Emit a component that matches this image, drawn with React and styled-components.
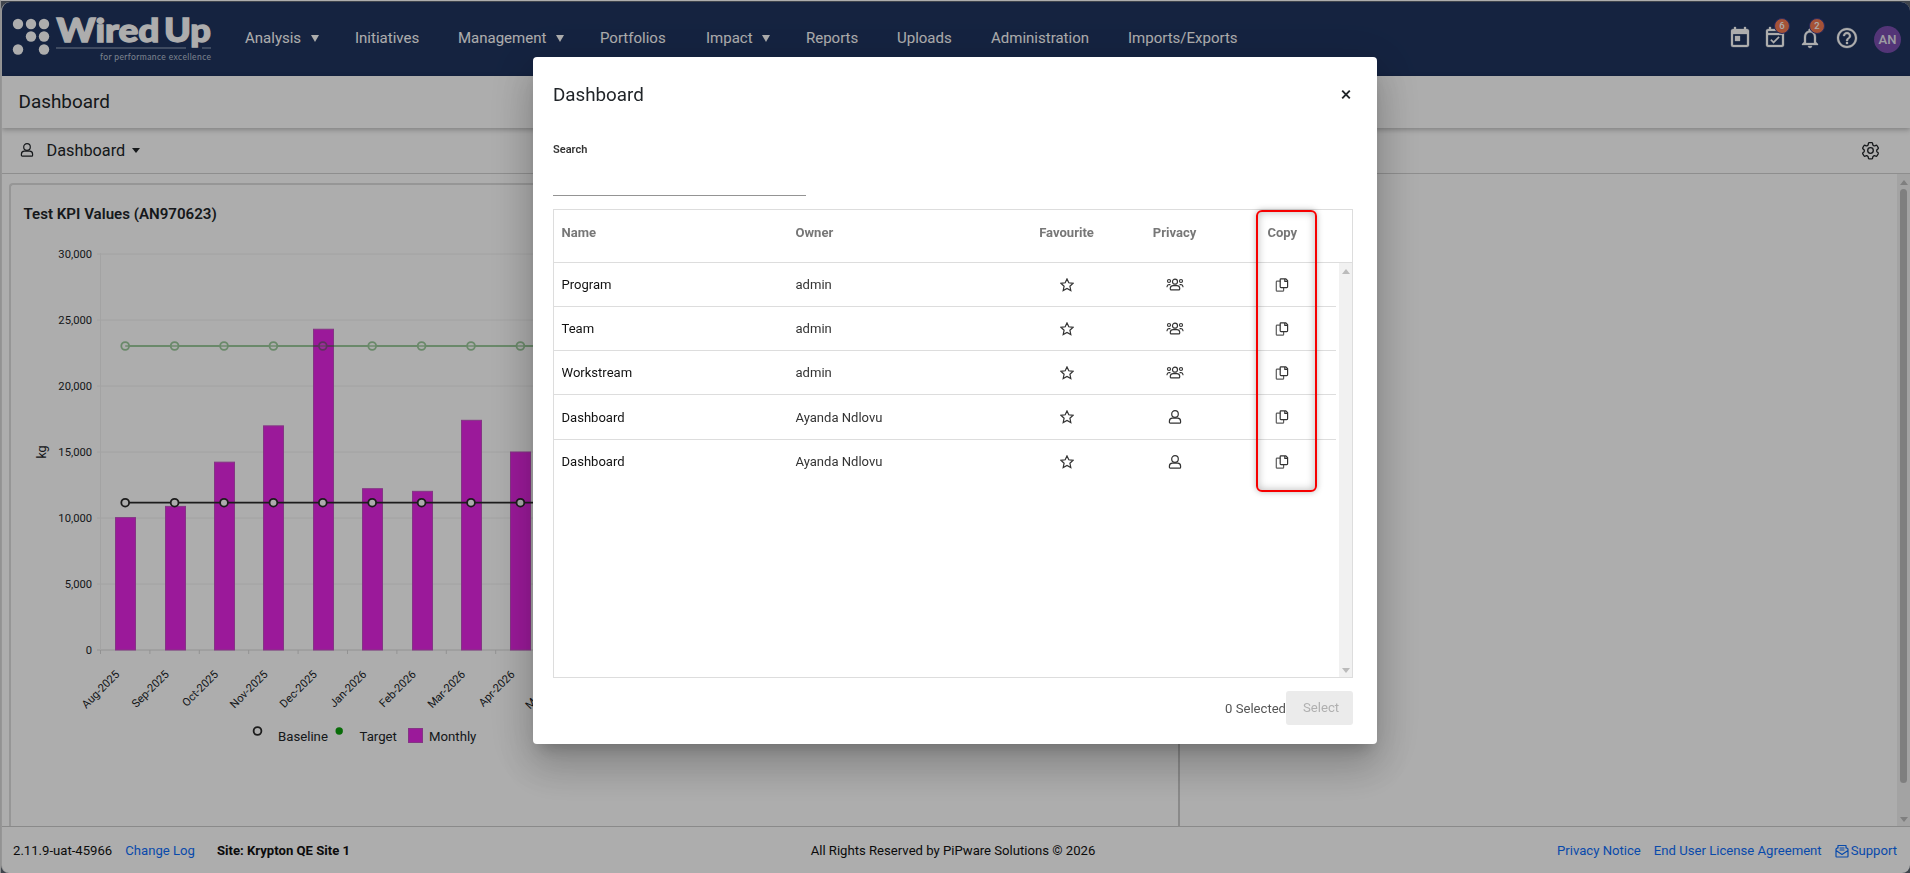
import React from 'react';
import styled, { createGlobalStyle } from 'styled-components';
import { MdToday, MdOutlineEventAvailable, MdNotificationsNone, MdHelpOutline } from 'react-icons/md';

const Global = createGlobalStyle`
  *{box-sizing:border-box}
  html,body,#root{height:100%;margin:0}
  body{font-family:Roboto,"Liberation Sans",sans-serif;color:#212529;background:#fff;overflow:hidden}
`;

const Frame = styled.div`height:873px;width:1910px;background:#5d6570;border:1px solid #d8d8d8;border-top-color:#fff;border-right:0;border-bottom:0;padding:1px 0 0 0;`;
const Page = styled.div`height:871px;display:flex;flex-direction:column;background:#fff;border-radius:9px 9px 8px 8px;overflow:hidden;border-left:1px solid #ddd;isolation:isolate;`;
const Header = styled.header`height:74px;flex:none;background:#1f345f;display:flex;align-items:center;color:#fff;`;
const LogoSvg = styled.svg`width:204px;height:60px;margin:0 0 2px 10px;flex:none;`;
const Nav = styled.nav`display:flex;margin-left:29px;margin-bottom:2px;align-items:center;`;
const NavItem = styled.a`width:${p => p.$w}px;font-size:15px;line-height:20px;white-space:nowrap;display:flex;align-items:center;gap:9.5px;`;
const Caret = styled.i`border:${p => p.$s || 4}px solid transparent;border-top:${p => p.$h || 7}px solid currentColor;border-bottom:0;`;
const Tools = styled.div`margin-left:auto;display:flex;align-items:center;height:28px;margin-bottom:2px;`;
const Tool = styled.div`width:${p => p.$w}px;height:24px;position:relative;svg{width:24px;height:24px;display:block}path:not([fill='none']){stroke:currentColor;stroke-width:.3px}`;
const Badge = styled.b`position:absolute;left:11px;top:-8px;width:16px;height:16px;border-radius:50%;background:#f37a51;border:1px solid #3d3f8c;font-size:9.5px;line-height:14px;text-align:center;font-weight:500;`;
const Avatar = styled.div`width:27px;height:27px;border-radius:50%;background:#7b4fb0;font-size:13px;font-weight:500;line-height:27px;text-align:center;margin:3px 9px 0 0;color:#e8e8f0;`;
const TitleBar = styled.div`height:52px;flex:none;padding:0 0 2px 16.5px;display:flex;align-items:center;font-size:18.9px;box-shadow:0 2px 5px rgba(0,0,0,.25);z-index:1;`;
const SubBar = styled.div`height:46px;flex:none;border-bottom:1px solid #d2d2d2;display:flex;align-items:center;padding:0 29px 1px 18px;font-size:16.3px;
  & > svg:last-child{margin-left:auto}`;
const SubName = styled.span`margin:0 7px 0 12.5px;`;
const Scroller = styled.main`flex:1;min-height:0;display:flex;justify-content:space-between;overflow:hidden;`;
const Card = styled.section`width:1171px;height:700px;margin:9px 0 0 7px;border:2px solid #ddd;border-right-color:#ccc;border-radius:4px;position:relative;`;
const CardTitle = styled.h2`font-size:15.1px;line-height:20px;font-weight:600;margin:19px 0 0 12.5px;`;
const Chart = styled.svg`display:block;width:700px;height:530px;margin:6px 0 0 0;`;
const Bar = styled.div`width:13px;background:#f1f1f1;display:flex;flex-direction:column;align-items:center;justify-content:space-between;padding:6px 0 4px;color:#bbb;`;
const Arrow = styled.i`border:4px solid transparent;border-width:${p => p.$up ? '0 4px 5px' : '5px 4px 0'};border-color:${p => p.$up ? 'transparent transparent currentColor' : 'currentColor transparent transparent'};`;
const Thumb = styled.div`width:7px;height:594px;border-radius:4px;background:#bcbcbc;margin:4px 0 auto;`;
const Footer = styled.footer`height:47px;flex:none;border-top:1px solid #ccc;display:flex;justify-content:space-between;align-items:center;padding:1px 13px 0 11px;font-size:13.13px;color:#111;`;
const Group = styled.div`width:420px;display:flex;align-items:center;gap:13px;justify-content:${p => p.$end ? 'flex-end' : 'flex-start'};`;
const Copyright = styled.span`margin-right:4px;`;
const Link = styled.a`color:#0d6efd;display:flex;align-items:center;gap:2px;`;
const Site = styled.b`margin-left:9px;font-weight:700;`;

const Backdrop = styled.div`position:fixed;inset:0;z-index:10;background:rgba(0,0,0,.32);display:flex;align-items:flex-start;justify-content:center;padding-top:57px;`;
const Dialog = styled.div`width:844px;height:687px;background:#fff;border-radius:4px;padding:24px 24px 0 20px;display:flex;flex-direction:column;box-shadow:0 11px 15px -7px rgba(0,0,0,.2),0 24px 38px 3px rgba(0,0,0,.14),0 9px 46px 8px rgba(0,0,0,.12);`;
const DialogHead = styled.div`height:27px;display:flex;justify-content:space-between;align-items:center;font-size:18.8px;svg{margin-right:2px}`;
const SearchLabel = styled.label`font-size:11px;line-height:14px;font-weight:600;margin-top:35px;color:#333;`;
const SearchInput = styled.input`width:253px;height:39px;border:0;border-bottom:1px solid #949494;outline:0;padding:0;background:none;`;
const Table = styled.div`width:800px;height:469px;margin-top:13px;border:1px solid #ddd;display:flex;flex-direction:column;position:relative;`;
const Row = styled.div`height:${p => p.$h || 44}px;display:grid;grid-template-columns:234px 217px 108px 108px 107.5px;padding-left:7.5px;align-items:center;font-size:13.05px;color:#333;border-bottom:1px solid ${p => p.$last ? 'transparent' : '#ddd'};
  & > :nth-child(n+3){justify-self:center}
  & > :first-child{color:${p => p.$head ? '#777' : '#111'}}`;
const HeadRow = styled(Row)`height:53px;flex:none;color:#777;font-weight:700;padding-bottom:7px;`;
const Body = styled.div`flex:1;display:flex;justify-content:space-between;`;
const Rows = styled.div`width:782px;`;
const Highlight = styled.div`position:absolute;left:702px;top:0;width:61px;height:282px;border:2px solid #f60000;border-radius:6px;box-shadow:0 0 6px rgba(0,0,0,.28),inset 0 0 8px rgba(0,0,0,.28);pointer-events:none;`;
const Actions = styled.div`margin-top:13px;display:flex;justify-content:flex-end;align-items:center;font-size:13.1px;color:#555;`;
const SelectButton = styled.button`width:67px;height:34px;border:0;border-radius:3px;background:#ebebeb;color:#b0b0b0;font:13.2px Roboto,sans-serif;padding:0 0 2px 3px;`;

const Ico = ({ w = 14, h = 14, vb = '0 0 14 14', sw = 1.2, children }) => (
  <svg width={w} height={h} viewBox={vb} fill="none" stroke="currentColor" strokeWidth={sw} strokeLinejoin="round" strokeLinecap="round">{children}</svg>
);
const User = () => <Ico><circle cx="7" cy="4" r="3.3" /><path d="M4.3 8.2h5.4a3 3 0 0 1 2.900 3v1q0 .9-.9.9h-9.400q-.9 0-.9-.9v-1a3 3 0 0 1 2.900-3z" /></Ico>;
const Group3 = () => <Ico w={18} h={14} vb="0 0 18 14"><circle cx="9" cy="3.700" r="2.500" /><circle cx="3" cy="3" r="1.500" /><circle cx="15" cy="3" r="1.500" /><path d="M7 7.700h4q2.300 0 2.700 2.300v1q0 .9-.9.9H5.200q-.9 0-.9-.9v-1Q4.700 7.700 7 7.700zM1 8.700q.2-2 2-2h1M17 8.700q-.2-2-2-2h-1" /></Ico>;
const Star = () => <Ico><path d="M7 .9l1.800 3.900 4.300.5-3.200 2.900.9 4.300L7 10.400l-3.800 2.100.9-4.300L.9 5.300l4.300-.5z" strokeLinejoin="miter" /></Ico>;
const Copy = () => <Ico><path d="M6 .8h4.900l1.700 1.800v6.200q0 .8-.8.8H6q-.8 0-.8-.8V1.600q0-.8.800-.8zM9.800.9v2.500h2.700" /><path d="M4.900 3.200H2.100q-.8 0-.8.8v8.400q0 .8.800.8h5.700q.8 0 .8-.8v-2.600" strokeOpacity=".8" /></Ico>;
const Gear = () => <Ico w={21} h={21} vb="0 0 24 24" sw={1.5}><path d="M9.600 3.900c.1-.5.600-.9 1.100-.9h2.600c.5 0 1 .4 1.100.9l.2 1.300c.1.400.3.700.6.900l.6.400c.3.200.7.200 1.100.1l1.200-.5c.5-.2 1.100 0 1.400.5l1.300 2.200c.3.500.2 1.100-.3 1.400l-1 .8c-.3.300-.4.600-.4 1v.6c0 .4.100.7.400 1l1 .8c.4.300.5.900.3 1.400l-1.300 2.200c-.3.500-.9.700-1.400.5l-1.200-.5c-.4-.1-.8-.1-1.100.1l-.6.400c-.3.200-.5.500-.6.900l-.2 1.300c-.1.500-.6.900-1.100.9h-2.600c-.5 0-1-.4-1.100-.9l-.2-1.300c-.1-.4-.3-.7-.6-.9l-.6-.4c-.3-.2-.7-.2-1.100-.1l-1.200.5c-.5.200-1.100 0-1.400-.5l-1.300-2.200c-.3-.5-.2-1.100.3-1.400l1-.8c.3-.3.400-.6.400-1v-.6c0-.4-.1-.7-.4-1l-1-.8c-.4-.3-.5-.9-.3-1.400l1.300-2.200c.3-.5.900-.7 1.400-.5l1.200.5c.4.100.8.100 1.100-.1l.6-.4c.3-.2.5-.5.6-.9z" /><circle cx="12" cy="12" r="3.200" /></Ico>;
const Mail = () => <Ico><path d="M3 4V1.500h8V4M1 5l2-1.500M13 5l-2-1.500M1 5v7.300q0 .7.700.7h10.600q.7 0 .7-.7V5M1 6.500l6 4 6-4M5 4h4M5 6h4" /></Ico>;
const Close = () => <Ico w={10} h={11} vb="0 0 10 11" sw={1.9}><path d="M1.200 1.700l7.600 7.600M8.800 1.700L1.200 9.300" strokeLinecap="butt" /></Ico>;

const Logo = () => (
  <LogoSvg viewBox="12 8 204 60" fill="#fff">
    {[[18, 24], [31, 24], [44, 24], [31, 36.500], [44, 36.500], [18, 49.500], [44, 49.500]].map(([x, y]) => <circle key={x + '-' + y} cx={x} cy={y} r="5.200" />)}
    <text x="56.500" y="42" fontFamily="Lato, sans-serif" fontWeight="900" fontSize="33" textLength="103" lengthAdjust="spacingAndGlyphs" stroke="#fff" strokeWidth="1.300">Wired</text>
    <text x="164" y="42" fontFamily="Lato, sans-serif" fontWeight="900" fontSize="33" textLength="47" lengthAdjust="spacingAndGlyphs" stroke="#fff" strokeWidth="1.300">Up</text>
    <path d="M56 48H186M202 48H211" stroke="#7482a0" strokeWidth="1.300" />
    <text x="100" y="60" fontFamily="Lato, sans-serif" fontSize="8.500" textLength="111" fill="#b9c1d2">for performance excellence</text>
  </LogoSvg>
);

const nav = [['Analysis', 110, 1], ['Initiatives', 103], ['Management', 142, 1], ['Portfolios', 106], ['Impact', 100, 1], ['Reports', 91], ['Uploads', 94], ['Administration', 137], ['Imports/Exports', 112]];
const months = ['Aug-2025', 'Sep-2025', 'Oct-2025', 'Nov-2025', 'Dec-2025', 'Jan-2026', 'Feb-2026', 'Mar-2026', 'Apr-2026', 'May-2026'];
const values = [10030, 10880, 14230, 16980, 24300, 12220, 12020, 17400, 15000];
const X0 = 100.500, STEP = 49.400, Y0 = 650, UNIT = 66 / 5000;
const mid = i => X0 + STEP * i + 24.700;
const yOf = v => Y0 - v * UNIT;

const KpiChart = () => (
  <Chart viewBox="11 230 700 530" fontFamily="Roboto, sans-serif" fill="#212529">
    {[0, 5, 10, 15, 20, 25, 30].map(k => (
      <g key={k}>
        <path d={`M97 ${yOf(k * 1000)}H711`} stroke={k ? '#f0f0f0' : '#d8d8d8'} />
        <text x="92" y={yOf(k * 1000) + 3.500} textAnchor="end" fontSize="11.200">{k ? `${k},000` : '0'}</text>
      </g>
    ))}
    <path d="M100.500 253V654" stroke="#f0f0f0" />
    <text transform="translate(46 452) rotate(-90)" textAnchor="middle" fontSize="12.500">kg</text>
    {values.map((v, i) => <rect key={i} x={Math.round(mid(i)) - 9.500} y={yOf(v)} width="20" height={Y0 - yOf(v)} fill="#e526e3" stroke="#c34fc3" />)}
    {months.map((m, i) => (
      <g key={m}>
        <path d={`M${X0 + STEP * i} 650V654`} stroke="#d8d8d8" />
        <text transform={`translate(${mid(i) - 5} 675) rotate(-45)`} textAnchor="end" fontSize="11.200">{m}</text>
      </g>
    ))}
    {[[23030, 0.4, '#0c7f0c', 'rgba(255,255,255,.3)'], [11160, 1, '#2a2a2a', '#fff']].map(([v, o, c, f]) => (
      <g key={v} stroke={c} strokeWidth="1.800" opacity={o}>
        <path d={`M${mid(0)} ${yOf(v)}H711`} />
        {months.map((m, i) => <circle key={m} cx={mid(i)} cy={yOf(v)} r="3.900" fill={f} />)}
      </g>
    ))}
    <circle cx="257.500" cy="731" r="3.900" fill="none" stroke="#2a2a2a" strokeWidth="1.800" />
    <circle cx="339.200" cy="731" r="3.700" fill="#0c9f0c" />
    <rect x="408.500" y="728.500" width="14" height="14" fill="#e526e3" stroke="#c34fc3" />
    <g fontSize="13.200"><text x="278" y="740.500">Baseline</text><text x="359.500" y="740.500">Target</text><text x="429" y="740.500">Monthly</text></g>
  </Chart>
);

const rows = [['Program', 'admin', 1], ['Team', 'admin', 1], ['Workstream', 'admin', 1], ['Dashboard', 'Ayanda Ndlovu'], ['Dashboard', 'Ayanda Ndlovu']];

export default function App() {
  return (
    <>
      <Global />
      <Frame><Page>
        <Header>
          <Logo />
          <Nav>{nav.map(([t, w, c]) => <NavItem key={t} $w={w}>{t}{c && <Caret />}</NavItem>)}</Nav>
          <Tools>
            <Tool $w={35}><MdToday /></Tool>
            <Tool $w={35}><MdOutlineEventAvailable /><Badge>6</Badge></Tool>
            <Tool $w={37}><MdNotificationsNone /><Badge>2</Badge></Tool>
            <Tool $w={39}><MdHelpOutline /></Tool>
            <Avatar>AN</Avatar>
          </Tools>
        </Header>
        <TitleBar>Dashboard</TitleBar>
        <SubBar><User /><SubName>Dashboard</SubName><Caret $h={5} /><Gear /></SubBar>
        <Scroller>
          <Card><CardTitle>Test KPI Values (AN970623)</CardTitle><KpiChart /></Card>
          <Bar><Arrow $up /><Thumb /><Arrow /></Bar>
        </Scroller>
        <Footer>
          <Group><span>2.11.9-uat-45966</span><Link>Change Log</Link><Site>Site: Krypton QE Site 1</Site></Group>
          <Copyright>All Rights Reserved by PiPware Solutions © 2026</Copyright>
          <Group $end><Link>Privacy Notice</Link><Link>End User License Agreement</Link><Link><Mail />Support</Link></Group>
        </Footer>
      </Page></Frame>
      <Backdrop>
        <Dialog>
          <DialogHead>Dashboard<Close /></DialogHead>
          <SearchLabel>Search</SearchLabel>
          <SearchInput />
          <Table>
            <HeadRow $head><span>Name</span><span>Owner</span><span>Favourite</span><span>Privacy</span><span>Copy</span></HeadRow>
            <Body>
              <Rows>{rows.map(([n, o, g], i) => (
                <Row key={i} $last={i === 4} $h={i === 3 ? 45 : 44}><span>{n}</span><span>{o}</span><Star />{g ? <Group3 /> : <User />}<Copy /></Row>
              ))}</Rows>
              <Bar><Arrow $up /><Arrow /></Bar>
            </Body>
            <Highlight />
          </Table>
          <Actions>0 Selected<SelectButton disabled>Select</SelectButton></Actions>
        </Dialog>
      </Backdrop>
    </>
  );
}
